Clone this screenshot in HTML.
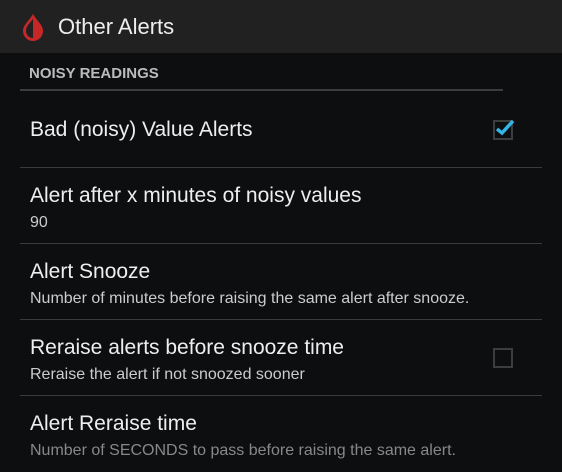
<html><head><style>
body{margin:0;width:562px;height:472px;background:#0d0e10;font-family:"Liberation Sans",sans-serif;overflow:hidden;position:relative}
.hd{position:absolute;left:0;top:0;width:562px;height:53px;background:#212121}
.t{position:absolute;white-space:nowrap}
.ln{position:absolute;left:20px;width:522px;height:1px;background:#3a3b3d}
.cb{position:absolute;left:493px;width:16px;height:16px;border:2px solid #3c3d3f}
.a{font-size:21px;color:#eee}
.b{font-size:16px;color:#ccc}
</style></head><body>
<div class="hd"></div>
<svg style="position:absolute;left:22px;top:13px" width="22" height="28" viewBox="0 0 22 28"><path d="M11 1 C7 8 1 12 1 18 A10 10 0 0 0 21 18 C21 12 15 8 11 1Z" fill="#c62828"/><path d="M11 6 L11 25 A7 7 0 0 1 4 18 C4 13 8 10 11 6Z" fill="#212121"/></svg>
<div class="t" style="left:58px;top:14px;font-size:22px;color:#eee">Other Alerts</div>
<div class="t" style="left:29px;top:65px;font-size:15px;font-weight:bold;color:#bbb">NOISY READINGS</div>
<div style="position:absolute;left:20px;top:89px;width:483px;height:2px;background:#3c3d40"></div>
<div class="t a" style="left:30px;top:118px">Bad (noisy) Value Alerts</div>
<div class="cb" style="top:120px"></div>
<svg style="position:absolute;left:494px;top:118px" width="22" height="18"><path d="M3 11 L8 15 L19 3" stroke="#33b5e5" stroke-width="3.5" fill="none"/></svg>
<div class="ln" style="top:167px"></div>
<div class="t a" style="left:30px;top:184px">Alert after x minutes of noisy values</div>
<div class="t b" style="left:30px;top:214px">90</div>
<div class="ln" style="top:243px"></div>
<div class="t a" style="left:30px;top:260px">Alert Snooze</div>
<div class="t b" style="left:30px;top:290px">Number of minutes before raising the same alert after snooze.</div>
<div class="ln" style="top:319px"></div>
<div class="t a" style="left:30px;top:336px">Reraise alerts before snooze time</div>
<div class="t b" style="left:30px;top:366px">Reraise the alert if not snoozed sooner</div>
<div class="cb" style="top:348px"></div>
<div class="ln" style="top:395px"></div>
<div class="t a" style="left:30px;top:412px">Alert Reraise time</div>
<div class="t b" style="left:30px;top:442px;color:#888">Number of SECONDS to pass before raising the same alert.</div>
</body></html>
